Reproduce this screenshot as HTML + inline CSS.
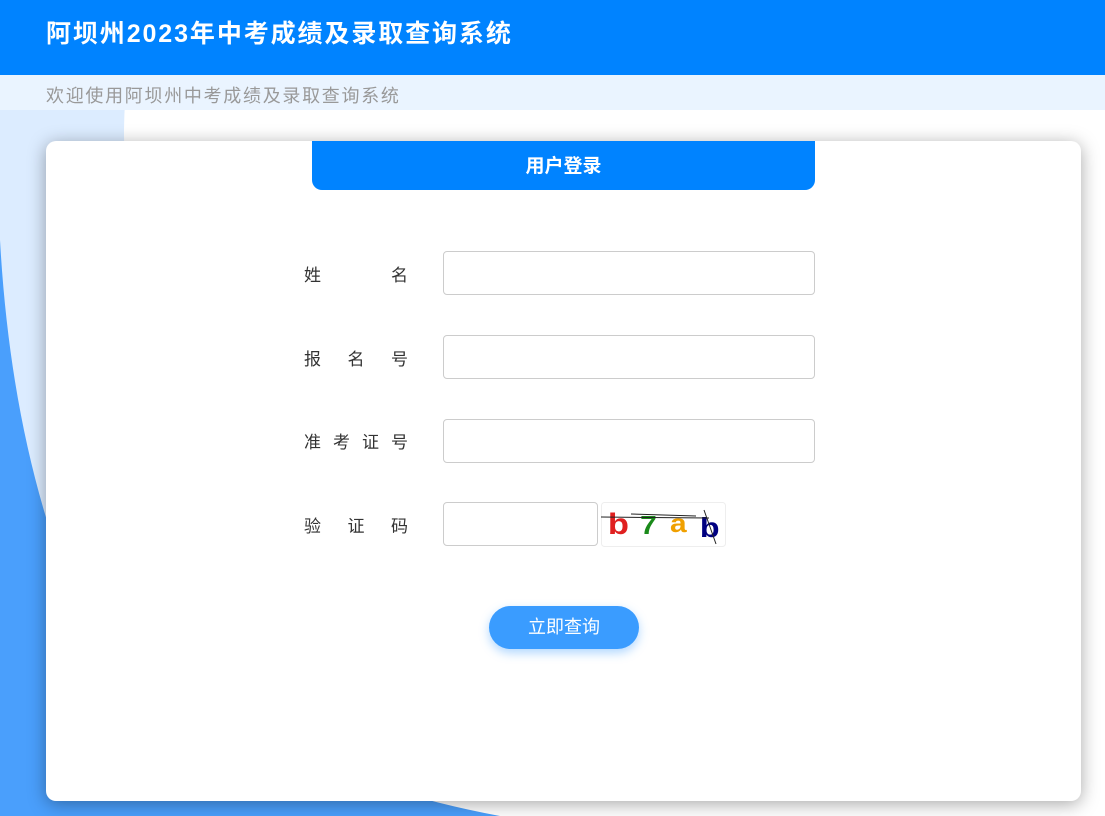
<!DOCTYPE html>
<html><head><meta charset="utf-8"><style>
*{margin:0;padding:0;box-sizing:border-box}
body{width:1105px;height:816px;overflow:hidden;background:#fff;font-family:"Liberation Sans","Noto Sans CJK SC",sans-serif;position:relative}
.hdr{position:absolute;left:0;top:0;width:1105px;height:75px;background:#0083ff}
.hdr h1{position:absolute;left:46px;top:14px;font-size:25px;color:#fff;font-weight:bold;letter-spacing:1.9px}
.sub{position:absolute;left:0;top:75px;width:1105px;height:35px;background:#eaf4ff}
.sub span{position:absolute;left:46px;top:7px;font-size:18px;color:#999;letter-spacing:1.7px}
svg.bg{position:absolute;left:0;top:75px}
.card{position:absolute;left:46px;top:141px;width:1035px;height:660px;background:#fff;border-radius:10px;box-shadow:0 3px 18px rgba(0,0,0,.35)}
.tab{position:absolute;left:266px;top:0;width:503px;height:49px;background:#0083ff;border-radius:0 0 10px 10px;color:#fff;font-weight:bold;font-size:19px;text-align:center;line-height:52px}
.lbl{position:absolute;left:258px;width:104px;font-size:17px;color:#333;display:flex;justify-content:space-between}
.in{position:absolute;left:397px;width:372px;height:44px;border:1px solid #ccc;border-radius:4px}
.btn{position:absolute;left:443px;top:465px;width:150px;height:43px;border-radius:22px;background:#3a9cff;color:#fff;font-size:18px;text-align:center;line-height:43px;box-shadow:0 4px 10px rgba(58,156,255,.4)}
</style></head><body>
<svg class="bg" width="1105" height="741" viewBox="0 75 1105 741">
<path d="M0 75 L128 75 Q120 130 128 200 L128 816 L0 816 Z" fill="#dcecff"/>
<path d="M0 240 Q10 420 60 560 Q200 760 500 816 L0 816 Z" fill="#4a9ffc"/>
</svg>
<div class="hdr"><h1>阿坝州2023年中考成绩及录取查询系统</h1></div>
<div class="sub"><span>欢迎使用阿坝州中考成绩及录取查询系统</span></div>
<div class="card">
<div class="tab">用户登录</div>
<div class="lbl" style="top:120px"><span>姓</span><span>名</span></div>
<div class="in" style="top:110px"></div>
<div class="lbl" style="top:204px"><span>报</span><span>名</span><span>号</span></div>
<div class="in" style="top:194px"></div>
<div class="lbl" style="top:287px"><span>准</span><span>考</span><span>证</span><span>号</span></div>
<div class="in" style="top:278px"></div>
<div class="lbl" style="top:371px"><span>验</span><span>证</span><span>码</span></div>
<div class="in" style="top:361px;width:155px"></div>
<svg style="position:absolute;left:555px;top:361px" width="125" height="45">
<rect x="0.5" y="0.5" width="124" height="44" rx="3" fill="#fff" stroke="#eee"/>
<text x="6" y="32" font-family="Liberation Sans" font-weight="bold" font-size="30" fill="#e02020" transform="scale(1.15 1)">b</text>
<text x="34" y="32" font-family="Liberation Sans" font-weight="bold" font-size="26" fill="#1a8a1a" transform="scale(1.15 1)">7</text>
<text x="60" y="30" font-family="Liberation Sans" font-weight="bold" font-size="26" fill="#f0a000" transform="scale(1.15 1)">a</text>
<text x="86" y="35" font-family="Liberation Sans" font-weight="bold" font-size="28" fill="#000080" transform="scale(1.15 1)">b</text>
<path d="M0 15 L108 16 M30 12 L95 14 M103 8 L115 42" stroke="#222" stroke-width="1" fill="none"/>
</svg>
<div class="btn">立即查询</div>
</div>
</body></html>
